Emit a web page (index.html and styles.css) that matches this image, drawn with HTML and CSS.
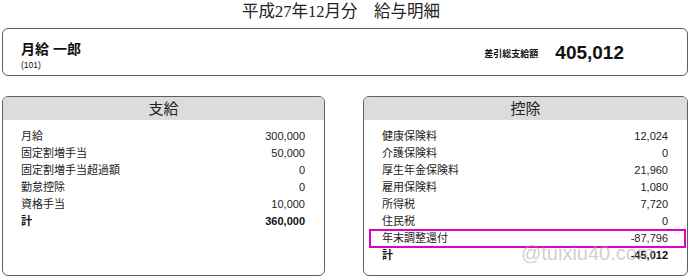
FILE: index.html
```html
<!DOCTYPE html>
<html lang="ja">
<head>
<meta charset="utf-8">
<title>給与明細</title>
<link rel="stylesheet" href="styles.css">
</head>
<body>
<div class="page">
  <h1 class="title">平成27年12月分　給与明細</h1>
  <section class="summary">
    <div class="person">
      <div class="name">月給 一郎</div>
      <div class="code">(101)</div>
    </div>
    <div class="total">
      <span class="total-label">差引総支給額</span>
      <span class="total-value">405,012</span>
    </div>
  </section>
  <div class="panels">
    <section class="panel">
      <div class="panel-head">支給</div>
      <div class="panel-body">
        <div class="row"><span>月給</span><span>300,000</span></div>
        <div class="row"><span>固定割増手当</span><span>50,000</span></div>
        <div class="row"><span>固定割増手当超過額</span><span>0</span></div>
        <div class="row"><span>勤怠控除</span><span>0</span></div>
        <div class="row"><span>資格手当</span><span>10,000</span></div>
        <div class="row sum"><span>計</span><span>360,000</span></div>
      </div>
    </section>
    <section class="panel">
      <div class="panel-head">控除</div>
      <div class="panel-body">
        <div class="row"><span>健康保険料</span><span>12,024</span></div>
        <div class="row"><span>介護保険料</span><span>0</span></div>
        <div class="row"><span>厚生年金保険料</span><span>21,960</span></div>
        <div class="row"><span>雇用保険料</span><span>1,080</span></div>
        <div class="row"><span>所得税</span><span>7,720</span></div>
        <div class="row"><span>住民税</span><span>0</span></div>
        <div class="row marked"><span>年末調整還付</span><span>-87,796</span></div>
        <div class="row sum"><span>計</span><span>-45,012</span></div>
      </div>
      <span class="watermark">@tuixiu40.com</span>
    </section>
  </div>
</div>
</body>
</html>
```
FILE: styles.css
```css
* { box-sizing: border-box; }
html, body { margin: 0; padding: 0; background: #fff; }
body {
  font-family: "Liberation Sans", Arial, "Noto Sans CJK JP", sans-serif;
  color: #111;
}
.page {
  width: 690px;
  padding: 0 2px;
}
.title {
  margin: 0;
  height: 28px;
  line-height: 24px;
  text-align: center;
  padding-right: 8px;
  font-family: "Liberation Serif", "Noto Sans CJK JP", serif;
  font-weight: normal;
  font-size: 16.5px;
  color: #222;
}
.summary {
  height: 48px;
  border: 1px solid #5e5e5e;
  border-radius: 6px;
  display: flex;
  align-items: center;
  justify-content: space-between;
  padding: 0 63px 0 18px;
}
.person { padding-top: 6px; }
.name {
  font-size: 14px;
  font-weight: bold;
  line-height: 17px;
}
.code {
  font-size: 8.5px;
  line-height: 10px;
  margin-top: 2px;
}
.total {
  display: flex;
  align-items: center;
  gap: 17px;
  padding-top: 2px;
}
.total-label {
  font-size: 9px;
  font-weight: bold;
}
.total-value {
  font-size: 19px;
  font-weight: bold;
}
.panels {
  margin-top: 20px;
  display: grid;
  grid-template-columns: 323px 325px;
  column-gap: 38px;
}
.panel {
  position: relative;
  height: 180px;
  border: 1px solid #5e5e5e;
  border-radius: 6px;
}
.panel-head {
  height: 23px;
  line-height: 23px;
  background: #dcdcdc;
  border-radius: 5px 5px 0 0;
  text-align: center;
  font-size: 15px;
  color: #222;
}
.panel-body {
  padding: 8px 19px 0 18px;
}
.row {
  position: relative;
  display: flex;
  justify-content: space-between;
  height: 17px;
  line-height: 17px;
  font-size: 11px;
  color: #222;
}
.row.sum { font-weight: bold; color: #111; }
.marked::before {
  content: "";
  position: absolute;
  left: -13px;
  right: -18px;
  top: -1px;
  bottom: -1px;
  border: 2px solid #e400c4;
}
.watermark {
  position: absolute;
  left: 157px;
  top: 146px;
  font-size: 20px;
  line-height: 20px;
  color: rgba(160, 160, 160, 0.5);
  pointer-events: none;
}
```
